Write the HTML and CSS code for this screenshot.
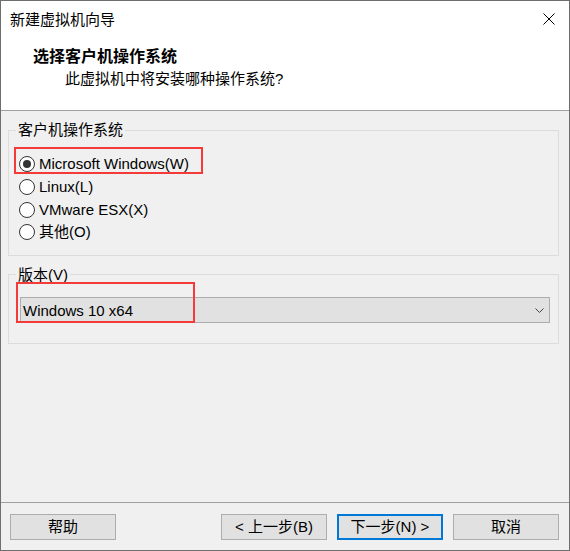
FILE: index.html
```html
<!DOCTYPE html>
<html lang="zh-CN">
<head>
<meta charset="utf-8">
<title>新建虚拟机向导</title>
<link rel="stylesheet" href="styles.css">
</head>
<body>
<div class="window">
  <header class="head">
    <div class="titlebar">
      <span class="title">新建虚拟机向导</span>
      <svg class="close" viewBox="0 0 12 12" aria-hidden="true"><path d="M0.5 0.5 L11.5 11.5 M11.5 0.5 L0.5 11.5" stroke="#000" stroke-width="1" fill="none"/></svg>
    </div>
    <div class="heading">选择客户机操作系统</div>
    <div class="subtitle">此虚拟机中将安装哪种操作系统?</div>
  </header>
  <main class="body">
    <fieldset class="group group-os">
      <legend>客户机操作系统</legend>
      <div class="radio checked"><span class="dot"></span>Microsoft Windows(W)</div>
      <div class="radio"><span class="dot"></span>Linux(L)</div>
      <div class="radio"><span class="dot"></span>VMware ESX(X)</div>
      <div class="radio"><span class="dot"></span>其他(O)</div>
    </fieldset>
    <fieldset class="group group-ver">
      <legend>版本(V)</legend>
      <div class="combo">
        <span class="combo-text">Windows 10 x64</span>
        <svg class="chev" viewBox="0 0 9 5" aria-hidden="true"><polyline points="0.5,0.5 4.5,4.5 8.5,0.5" stroke="#444" stroke-width="1" fill="none"/></svg>
      </div>
    </fieldset>
  </main>
  <footer class="foot">
    <button class="btn">帮助</button>
    <div class="spacer"></div>
    <button class="btn">&lt; 上一步(B)</button>
    <button class="btn primary">下一步(N) &gt;</button>
    <button class="btn">取消</button>
  </footer>
  <div class="mark mark-os"></div>
  <div class="mark mark-ver"></div>
</div>
</body>
</html>
```

FILE: styles.css
```css
* { box-sizing: border-box; }
html, body { margin: 0; padding: 0; }
body {
  font-family: "Liberation Sans", "Noto Sans CJK SC", sans-serif;
  font-size: 15px;
  color: #000;
  background: #f0f0f0;
}
.window {
  position: relative;
  width: 570px;
  height: 551px;
  border: 1px solid #6f6f6f;
  display: flex;
  flex-direction: column;
  background: #f0f0f0;
}
.head {
  flex: none;
  height: 110px;
  background: #fff;
  border-bottom: 1px solid #a0a0a0;
}
.titlebar {
  height: 46px;
  display: flex;
  justify-content: space-between;
  align-items: flex-start;
}
.title {
  margin: 9px 0 0 9px;
  line-height: 20px;
}
.close {
  width: 12px;
  height: 12px;
  margin: 12px 14px 0 0;
}
.heading {
  padding-left: 32px;
  font-size: 16px;
  font-weight: bold;
  line-height: 20px;
}
.subtitle {
  padding-left: 64px;
  margin-top: 2px;
  line-height: 20px;
}
.body {
  flex: 1;
  padding-top: 9px;
}
.group {
  margin: 0 10px 0 7px;
  border: 1px solid #dcdcdc;
  padding: 0;
  min-width: 0;
}
.group legend {
  margin-left: 7px;
  padding: 0 2px;
  line-height: 20px;
}
.group-os {
  padding: 13px 0 11px;
}
.radio {
  display: flex;
  align-items: center;
  height: 22.7px;
  line-height: 22px;
  padding-left: 10px;
}
.dot {
  width: 16px;
  height: 16px;
  border: 1px solid #333;
  border-radius: 50%;
  background: #fff;
  margin-right: 4px;
  display: flex;
  align-items: center;
  justify-content: center;
  flex: none;
}
.checked .dot::after {
  content: "";
  width: 8px;
  height: 8px;
  border-radius: 50%;
  background: #333;
}
.group-ver {
  margin-top: 9px;
  padding: 12px 0 20px;
}
.combo {
  height: 26px;
  margin: 0 8px 0 11px;
  border: 1px solid #adadad;
  background: #e1e1e1;
  display: flex;
  align-items: center;
  justify-content: space-between;
  padding: 1px 5px 0 2px;
}
.chev {
  width: 9px;
  height: 5px;
}
.foot {
  flex: none;
  height: 48px;
  border-top: 1px solid #a0a0a0;
  display: flex;
  align-items: flex-start;
  gap: 10px;
  padding: 11px 10px 0 9px;
}
.spacer { flex: 1; }
.btn {
  width: 106px;
  height: 26px;
  border: 1px solid #adadad;
  background: #e1e1e1;
  font: inherit;
  color: #000;
  padding: 0;
  line-height: 22px;
}
.primary {
  border: 2px solid #0078d7;
}
.mark {
  position: absolute;
  border: 2px solid #f53a3a;
}
.mark-os {
  left: 13px;
  top: 146px;
  width: 189px;
  height: 27px;
}
.mark-ver {
  left: 15px;
  top: 281px;
  width: 179px;
  height: 41px;
}
```
